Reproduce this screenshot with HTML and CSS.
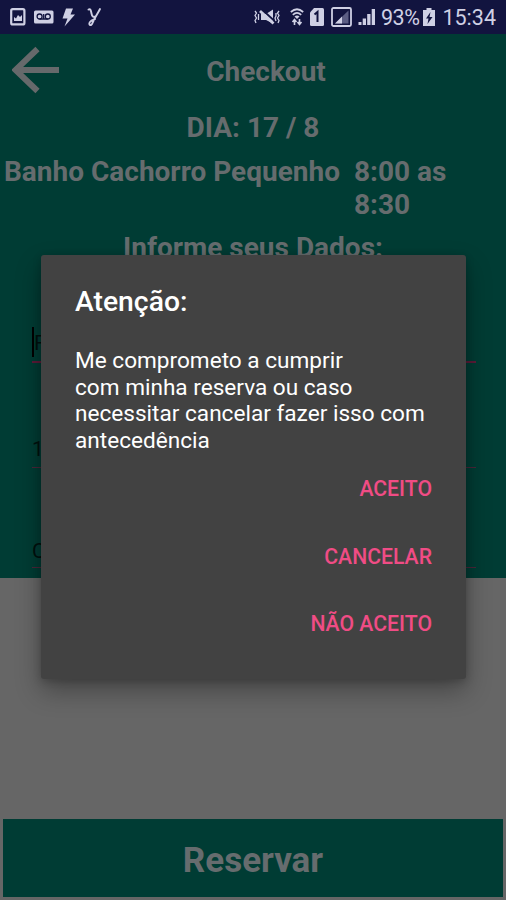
FILE: index.html
```html
<!DOCTYPE html>
<html lang="pt-BR">
<head>
    <meta charset="UTF-8">
    <meta name="viewport" content="width=device-width, initial-scale=1.0">
    <title>Checkout</title>
    <link rel="stylesheet" href="styles.css">
</head>
<body>
    <div class="status-bar">
        <div class="status-left">
            <svg width="16" height="18" viewBox="0 0 16 18">
                <rect x="1.2" y="1.2" width="13.2" height="15.2" rx="1.5" fill="none" stroke="#cfd0e4" stroke-width="2.2"/>
                <path d="M4 13V9l2 1.5L8 7l2 2 2-2v6z" fill="#cfd0e4"/>
            </svg>
            <svg width="20" height="14" viewBox="0 0 20 14">
                <rect x="0" y="0.5" width="19.5" height="13" rx="1.5" fill="#cfd0e4"/>
                <g fill="none" stroke="#12143f" stroke-width="1.3">
                    <circle cx="5.6" cy="6.5" r="2.5"/>
                    <circle cx="13.8" cy="6.5" r="2.5"/>
                    <path d="M5.6 9h8.2M9.7 4v5"/>
                </g>
            </svg>
            <svg class="bolt" width="13" height="19" viewBox="0 0 13 19">
                <path d="M4 0.5h7L8.5 6.500H13L2.5 18.5 5.5 10.500H0.5z" fill="#cfd0e4"/>
            </svg>
            <svg class="ygrec" width="15" height="20" viewBox="0 0 15 20">
                <path d="M1.5 2.5c2-1 2.500 1 3 4s2 4 3.500 3M13 2C11 6 7 12 5.500 16s-4.500 1.500-2.500-1 4-2 5-3" fill="none" stroke="#cfd0e4" stroke-width="1.9" stroke-linecap="round"/>
            </svg>
        </div>
        <div class="status-right">
            <svg width="27" height="18" viewBox="0 0 27 18">
                <path d="M7 6h5l7-4.500v14L12 12H7z" fill="#cfd0e4"/>
                <path d="M8 1.500l13 12" stroke="#12143f" stroke-width="1.800"/>
                <path d="M6 3l13.500 12.500" stroke="#cfd0e4" stroke-width="2.800"/>
                <path d="M1 3l1.500 2L1 7.500 2.500 10 1 12.500 2 15M4.500 6v6M25 3l-1.500 2L25 7.500 23.500 10l1.500 2.500L24 15M22 5v3l-1 2 1 3" fill="none" stroke="#cfd0e4" stroke-width="1.300"/>
            </svg>
            <svg class="wifi" width="14" height="18" viewBox="0 0 14 18">
                <g fill="none" stroke="#cfd0e4" stroke-width="1.700">
                    <path d="M0.800 4Q7-1.500 13.200 4M2.800 6.800Q7 3 11.200 6.800"/>
                </g>
                <path d="M4.500 8.500Q7 6.500 9.500 8.500L7 11z" fill="#cfd0e4"/>
                <path d="M4.500 17v-5M2.500 14l2-2.500 2 2.500M9.500 11v5M7.500 14l2 2.500 2-2.500" fill="none" stroke="#cfd0e4" stroke-width="1.600"/>
            </svg>
            <svg class="sim" width="14" height="18" viewBox="0 0 14 18">
                <path d="M4 0h8.500q1.500 0 1.500 1.500v15q0 1.500-1.500 1.500h-11Q0 18 0 16.500V4.500z" fill="#cfd0e4"/>
                <path d="M4.500 6.500L7.500 4v10" fill="none" stroke="#12143f" stroke-width="2"/>
            </svg>
            <svg class="signal-box" width="21" height="20" viewBox="0 0 21 20">
                <rect x="1" y="1" width="19" height="18" rx="1.500" fill="none" stroke="#cfd0e4" stroke-width="1.800"/>
                <path d="M4 16.500L17.500 3.500v13z" fill="#5b5d83"/>
                <path d="M4 16.500L11 9.500v7z" fill="#cfd0e4"/>
            </svg>
            <svg class="signal" width="18" height="18" viewBox="0 0 18 18">
                <path d="M0.500 14h3v3h-3zM4.700 10.500h3.300V17H4.700zM9.200 6h3.300v11H9.200zM13.700 1H17v16h-3.300z" fill="#cfd0e4"/>
            </svg>
            <span class="percent">93%</span>
            <svg class="battery" width="12" height="18" viewBox="0 0 12 18">
                <path d="M3.500 0h5v2H12v16H0V2h3.500z" fill="#cfd0e4"/>
                <path d="M7.500 4L3 10.500h2.500L4.500 16 9.500 9H6.500z" fill="#12143f"/>
            </svg>
            <span class="clock">15:34</span>
        </div>
    </div>

    <div class="checkout">
        <div class="title-bar">
            <svg class="back" width="48" height="48" viewBox="0 0 48 48">
                <path d="M47 24H3M25.500 3L3.500 24l22 21" fill="none" stroke="#66696b" stroke-width="6"/>
            </svg>
            <h1>Checkout</h1>
        </div>
        <p class="day">DIA: 17 / 8</p>
        <div class="service">
            <span class="service-name">Banho Cachorro Pequenho</span>
            <span class="service-time">8:00 as<br>8:30</span>
        </div>
        <p class="info">Informe seus Dados:</p>
        <div class="fields">
            <div class="field focused">F</div>
            <div class="field">1</div>
            <div class="field">C</div>
        </div>
    </div>

    <button class="reserve">Reservar</button>

    <div class="dialog">
        <h2>Atenção:</h2>
        <p>Me comprometo a cumprir<br>com minha reserva ou caso<br>necessitar cancelar fazer isso com<br>antecedência</p>
        <div class="actions">
            <button>ACEITO</button>
            <button>CANCELAR</button>
            <button>NÃO ACEITO</button>
        </div>
    </div>
</body>
</html>
```
FILE: styles.css
```css
* {
    box-sizing: border-box;
}

body {
    font-family: Roboto, "Liberation Sans", sans-serif;
    background-color: #666;
    display: flex;
    flex-direction: column;
    height: 900px;
    margin: 0;
    overflow: hidden;
    position: relative;
}

h1, h2, p {
    margin: 0;
}

button {
    font-family: inherit;
    border: none;
    cursor: pointer;
}

.status-bar {
    background-color: #12143f;
    color: #cfd0e4;
    height: 34px;
    flex: none;
    display: flex;
    justify-content: space-between;
    align-items: center;
    padding: 0 10px;
}

.status-left, .status-right {
    display: flex;
    align-items: center;
}

.status-left {
    gap: 8px;
}

.ygrec {
    margin-left: 4px;
}

.wifi {
    margin-left: 9px;
}

.sim {
    margin-left: 6px;
}

.signal-box {
    margin-left: 7px;
}

.signal {
    margin-left: 6px;
}

.percent, .clock {
    font-size: 21.5px;
    line-height: 34px;
    padding-top: 2px;
}

.percent {
    margin-left: 5px;
    letter-spacing: -0.5px;
}

.battery {
    margin-left: 4px;
}

.clock {
    margin-left: 7px;
}

.checkout {
    background-color: #003c34;
    color: #666c6e;
    height: 544px;
    flex: none;
    font-size: 28px;
    font-weight: bold;
    line-height: 33px;
}

.title-bar {
    display: grid;
    grid-template-columns: 60px 1fr 34px;
    height: 77px;
    align-items: start;
    padding-top: 12px;
}

.back {
    margin-left: 12px;
}

h1 {
    font-size: 28px;
    line-height: 33px;
    text-align: center;
    padding-top: 9px;
}

.day {
    text-align: center;
}

.service {
    display: flex;
    gap: 14px;
    padding: 11px 4px 10px;
}

.info {
    text-align: center;
}

.fields {
    padding: 54px 30px 0 32px;
}

.field {
    color: #00100e;
    height: 100px;
    padding-top: 71px;
    border-bottom: 1px solid #4a2639;
    font-size: 21px;
    font-weight: normal;
    line-height: 25px;
}

.field:nth-child(2) {
    height: 105px;
    padding-top: 74px;
}

.field.focused {
    height: 45px;
    padding: 13px 0 0 2px;
    border-bottom: 2px solid #5c1b38;
    background: linear-gradient(#000, #000) 0 9px / 2px 30px no-repeat;
}

.reserve {
    background-color: #003c34;
    color: #666c6e;
    height: 78px;
    flex: none;
    margin: auto 3px 3px;
    font-size: 35px;
    font-weight: bold;
    padding: 4px 0 0;
}

.dialog {
    position: absolute;
    left: 41px;
    top: 255px;
    width: 425px;
    height: 424px;
    padding: 30px 34px 0;
    background-color: #424242;
    border-radius: 3px;
    box-shadow: 0 12px 26px rgba(0, 0, 0, 0.32), 0 2px 8px rgba(0, 0, 0, 0.2);
    color: #fff;
}

h2 {
    font-size: 28.3px;
    font-weight: 500;
    line-height: 34px;
}

.dialog p {
    margin-top: 29px;
    font-size: 22.6px;
    line-height: 26.7px;
    white-space: nowrap;
}

.actions {
    display: flex;
    flex-direction: column;
    align-items: flex-end;
}

.actions button {
    background: none;
    color: #f04c85;
    height: 67.5px;
    padding: 0;
    font-size: 21.2px;
    font-weight: 500;
}
```
